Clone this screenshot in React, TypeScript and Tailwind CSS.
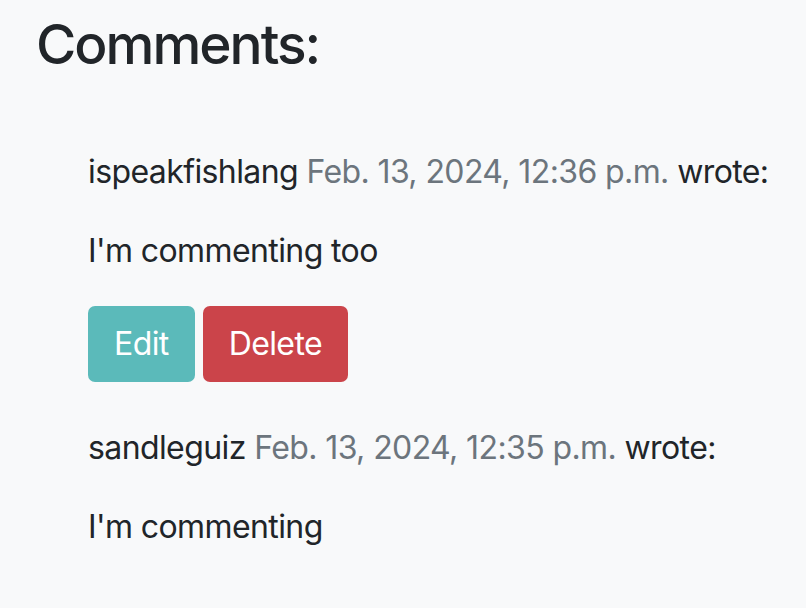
import React from 'react';

const comments = [
  { id: 1, author: 'ispeakfishlang', date: 'Feb. 13, 2024, 12:36 p.m.', body: "I'm commenting too", own: true },
  { id: 2, author: 'sandleguiz', date: 'Feb. 13, 2024, 12:35 p.m.', body: "I'm commenting", own: false },
];

export default function App() {
  return (
    <div
      className="min-h-[608px] w-[806px] bg-[#f8f9fa] text-[#212529] pl-[36px] pt-[11px]"
      style={{ fontFamily: 'Inter, "Noto Sans", sans-serif' }}
    >
      <h2 className="text-[55px] leading-[67px] font-medium tracking-[-2px]">Comments:</h2>

      <div className="pl-[52px] pt-[70px]">
        {comments.map((c) => (
          <div key={c.id} className="text-[32px] leading-[48px] tracking-[-0.6px]">
            <p>
              {c.author} <span className="text-[#6c757d]">{c.date}</span> wrote:
            </p>
            <p className="mt-[31px]">{c.body}</p>
            {c.own && (
              <div className="flex gap-[8px] mt-[31px] mb-[42px]">
                <button className="h-[76px] px-[26px] rounded-[7px] bg-[#5bbaba] text-white">Edit</button>
                <button className="h-[76px] px-[26px] rounded-[7px] bg-[#cb444a] text-white">Delete</button>
              </div>
            )}
          </div>
        ))}
      </div>
    </div>
  );
}
